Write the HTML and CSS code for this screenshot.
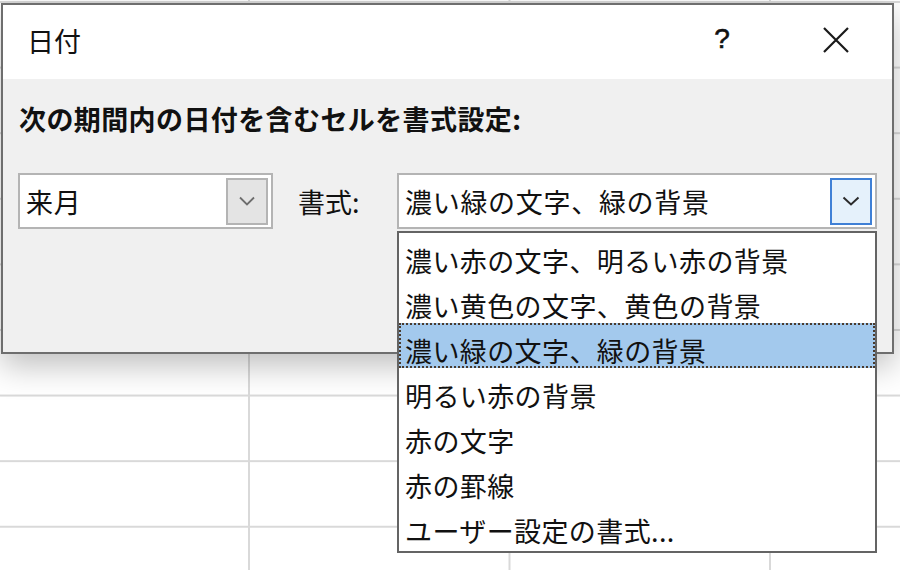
FILE: index.html
```html
<!DOCTYPE html>
<html lang="ja">
<head>
<meta charset="utf-8">
<title>日付</title>
<link rel="stylesheet" href="styles.css">
</head>
<body>
<div class="sheet"></div>
<div class="dialog">
  <div class="titlebar">
    <span class="title">日付</span>
    <span class="help">?</span>
    <span class="close">
      <svg width="28" height="28" viewBox="0 0 28 28"><path d="M2 2 L26 26 M26 2 L2 26" stroke="#1a1a1a" stroke-width="2.2" fill="none"/></svg>
    </span>
  </div>
  <div class="body">
    <div class="heading">次の期間内の日付を含むセルを書式設定:</div>
    <div class="row">
      <div class="combo combo-period">
        <span class="combo-text">来月</span>
        <span class="combo-btn">
          <svg width="16" height="10" viewBox="0 0 16 10"><path d="M1 1.5 L8 8.5 L15 1.5" stroke="#6d6d6d" stroke-width="1.8" fill="none"/></svg>
        </span>
      </div>
      <div class="label">書式:</div>
      <div class="combo combo-format">
        <span class="combo-text">濃い緑の文字、緑の背景</span>
        <span class="combo-btn combo-btn-active">
          <svg width="18" height="10" viewBox="0 0 18 10"><path d="M1.5 1.5 L9 8.5 L16.5 1.5" stroke="#2b2b2b" stroke-width="2" fill="none"/></svg>
        </span>
        <ul class="list">
          <li>濃い赤の文字、明るい赤の背景</li>
          <li>濃い黄色の文字、黄色の背景</li>
          <li class="selected">濃い緑の文字、緑の背景</li>
          <li>明るい赤の背景</li>
          <li>赤の文字</li>
          <li>赤の罫線</li>
          <li>ユーザー設定の書式...</li>
        </ul>
      </div>
    </div>
  </div>
</div>
</body>
</html>
```
FILE: styles.css
```css
html, body {
  margin: 0;
  padding: 0;
}
body {
  width: 900px;
  height: 570px;
  overflow: hidden;
  position: relative;
  background-color: #ffffff;
  font-family: "Noto Sans CJK JP", "Noto Sans", sans-serif;
  color: #111;
}
.sheet {
  width: 900px;
  height: 570px;
  background-image:
    linear-gradient(to bottom, #d9d9d9 2px, transparent 2px),
    linear-gradient(to right, #d9d9d9 2px, transparent 2px);
  background-size: 100% 65.6px, 260.5px 100%;
  background-position: 0 1px, 248px 0;
}
.dialog {
  position: absolute;
  left: 1px;
  top: 3px;
  width: 893px;
  height: 351px;
  box-sizing: border-box;
  border: 2px solid #6e6e6e;
  background: #f0f0f0;
  box-shadow: 0 12px 30px rgba(0, 0, 0, 0.25);
}
.titlebar {
  height: 74px;
  background: #ffffff;
  display: flex;
  align-items: center;
  padding-left: 24px;
}
.title {
  font-size: 27px;
  flex: 1;
  margin-top: -4px;
}
.help {
  font-family: "Liberation Sans", sans-serif;
  font-size: 28px;
  width: 30px;
  text-align: center;
  margin-right: 85px;
  margin-top: -6px;
  -webkit-text-stroke: 0.6px #111;
}
.close {
  width: 28px;
  height: 28px;
  margin-right: 42px;
  margin-top: -4px;
  display: flex;
}
.body {
  padding: 0 15px;
}
.heading {
  font-size: 27px;
  font-weight: bold;
  line-height: 40px;
  margin-top: 20px;
  padding-left: 1px;
  letter-spacing: 0.4px;
}
.row {
  display: flex;
  align-items: center;
  margin-top: 34px;
}
.combo {
  position: relative;
  height: 56px;
  box-sizing: border-box;
  border: 2px solid #b4b4b4;
  background: #ffffff;
  display: flex;
  align-items: center;
  justify-content: space-between;
  padding: 0 3px 0 6px;
  font-size: 27px;
}
.combo-period {
  width: 255px;
  margin-right: 25px;
}
.combo-format {
  width: 480px;
}
.combo-text {
  line-height: 1;
  margin-top: 0;
  letter-spacing: 0.7px;
}
.combo-btn {
  width: 42px;
  height: 47px;
  box-sizing: border-box;
  border: 2px solid #b4b4b4;
  background: #e4e4e4;
  display: flex;
  align-items: center;
  justify-content: center;
}
.combo-btn-active {
  width: 42px;
  border-color: #3f80d6;
  background: #e5f1fb;
}
.label {
  width: 99px;
  flex: none;
  font-size: 27px;
  margin-top: 0;
}
.list {
  position: absolute;
  left: -2px;
  top: 56px;
  width: 480px;
  box-sizing: border-box;
  margin: 0;
  padding: 0 0 3px;
  list-style: none;
  border: 2px solid #646464;
  background: #ffffff;
}
.list li {
  height: 45px;
  box-sizing: border-box;
  line-height: 41px;
  padding-top: 5px;
  padding-left: 4px;
  font-size: 27px;
  white-space: nowrap;
  border: 2px solid transparent;
  letter-spacing: 0.4px;
}
.list li.selected {
  background: #a3c9ed;
  border: 2px dotted #4a3b2e;
}
```
